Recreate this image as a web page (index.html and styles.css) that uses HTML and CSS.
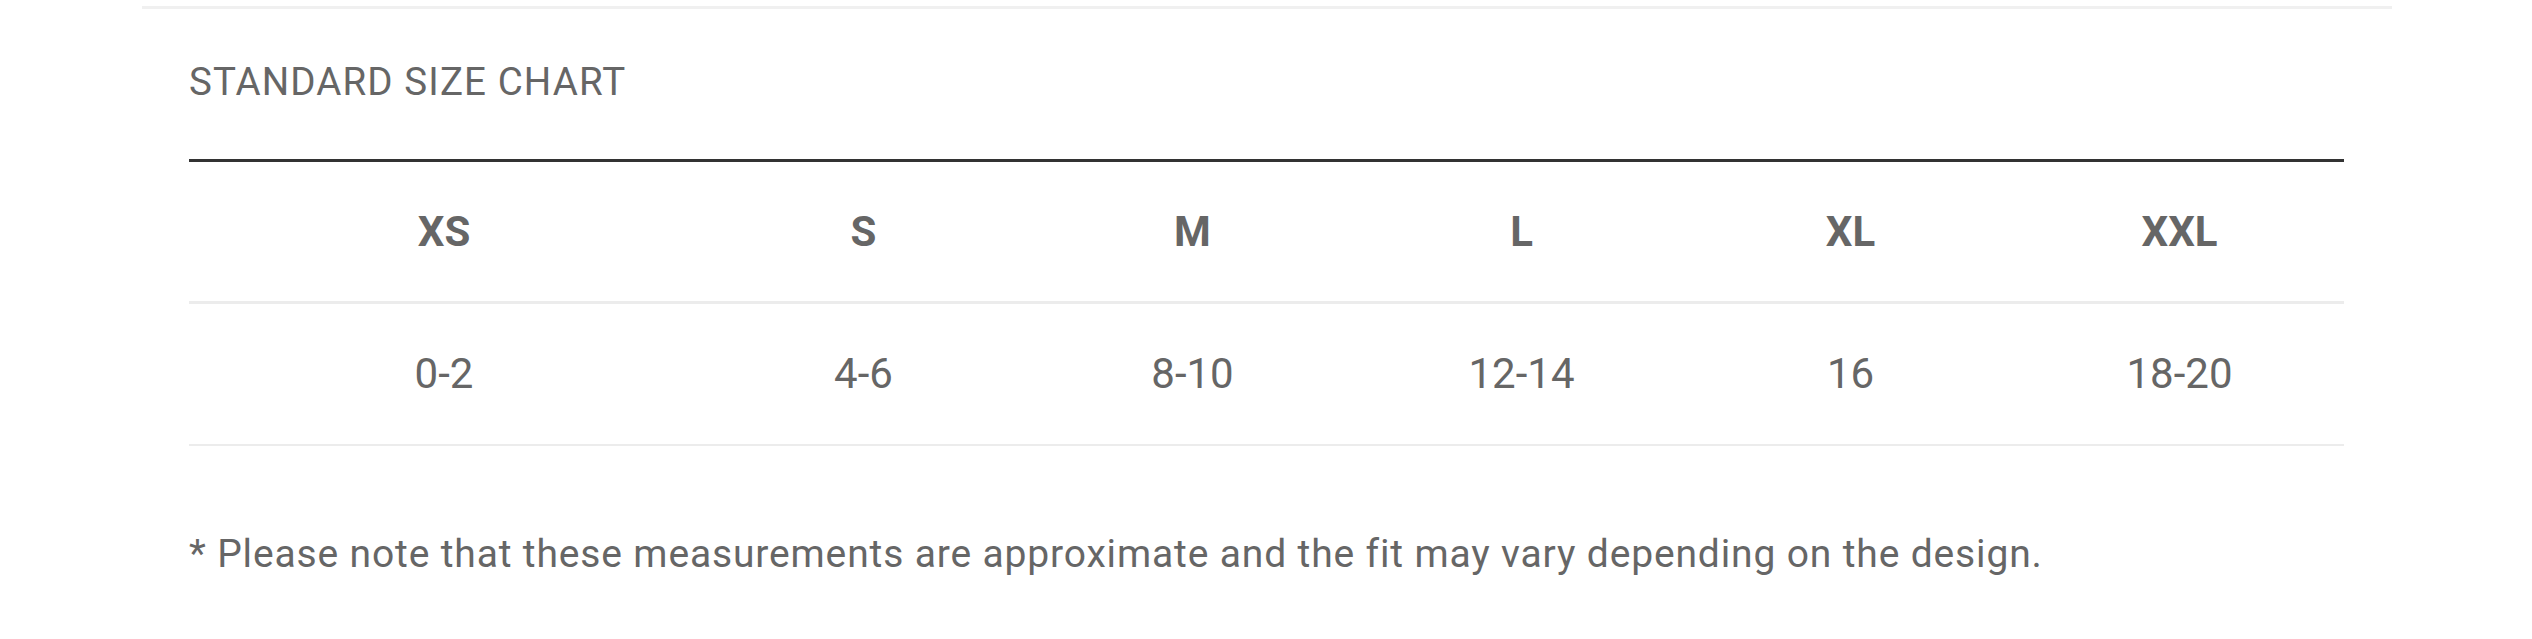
FILE: index.html
```html
<!DOCTYPE html>
<html>
<head>
<meta charset="utf-8">
<link rel="stylesheet" href="styles.css">
</head>
<body>
<div class="page">
  <h2 class="title">STANDARD SIZE CHART</h2>
  <div class="chart">
    <div class="row head">
      <div class="cell">XS</div>
      <div class="cell">S</div>
      <div class="cell">M</div>
      <div class="cell">L</div>
      <div class="cell">XL</div>
      <div class="cell">XXL</div>
    </div>
    <div class="row data">
      <div class="cell">0-2</div>
      <div class="cell">4-6</div>
      <div class="cell">8-10</div>
      <div class="cell">12-14</div>
      <div class="cell">16</div>
      <div class="cell">18-20</div>
    </div>
  </div>
  <p class="note">* Please note that these measurements are approximate and the fit may vary depending on the design.</p>
</div>
</body>
</html>
```
FILE: styles.css
```css
html, body {
  margin: 0;
  padding: 0;
  background: #fff;
}
body {
  font-family: Roboto, "Liberation Sans", sans-serif;
  color: #666;
}
.page {
  margin: 6px 140px 0 142px;
  border-top: 3px solid #f0f0f0;
  padding: 0 48px 0 47px;
}
.title {
  margin: 49px 0 0;
  font-size: 38.5px;
  line-height: 48px;
  font-weight: 400;
  letter-spacing: 1.1px;
  color: #666;
}
.chart {
  margin-top: 53px;
  border-top: 3px solid #333;
}
.row {
  display: grid;
  grid-template-columns: 510px repeat(5, 1fr);
  align-items: center;
}
.head {
  height: 139px;
  border-bottom: 3px solid #ececec;
}
.data {
  height: 140px;
  border-bottom: 2px solid #ececec;
}
.cell {
  text-align: center;
  font-size: 42px;
  line-height: 50px;
}
.head .cell {
  font-weight: 700;
}
.note {
  margin: 86px 0 0;
  font-size: 39px;
  line-height: 44px;
  letter-spacing: 0.85px;
}
```
